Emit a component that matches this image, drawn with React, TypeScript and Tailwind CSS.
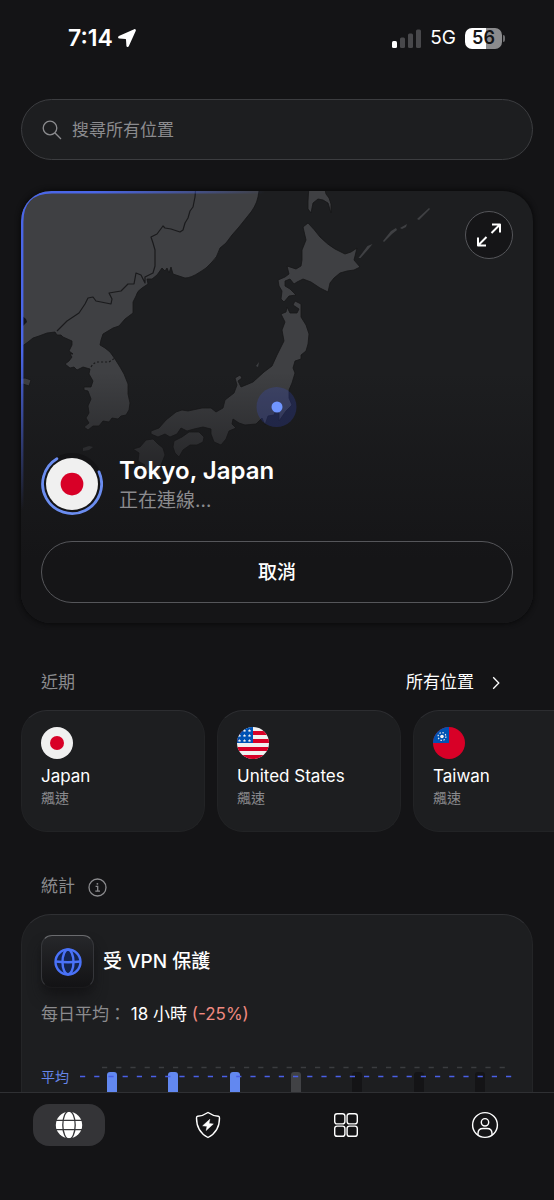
import { ReactNode, useState } from "react";
import clsx from "clsx";

type Country = "jp" | "us" | "tw";

const recents: { code: Country; name: string; detail: string }[] = [
    { code: "jp", name: "Japan", detail: "飆速" },
    { code: "us", name: "United States", detail: "飆速" },
    { code: "tw", name: "Taiwan", detail: "飆速" },
];

const bars = ["bg-[#6288f0]", "bg-[#6288f0]", "bg-[#6288f0]", "bg-[#414245]", "bg-[#141416]", "bg-[#141416]", "bg-[#141416]"];

function Flag({ code, className }: { code: Country; className?: string }) {
    return (
        <svg viewBox="0 0 32 32" className={clsx("shrink-0 overflow-hidden rounded-full", className)} aria-hidden="true">
            {code === "jp" && (
                <>
                    <rect width="32" height="32" fill="#f0f0f0" />
                    <circle cx="16" cy="16" r="7" fill="#d80027" />
                </>
            )}
            {code === "us" && (
                <>
                    <rect width="32" height="32" fill="#f0f0f0" />
                    {[4, 12, 20, 28].map((y) => (
                        <rect key={y} y={y} width="32" height="4" fill="#d80027" />
                    ))}
                    <rect width="16" height="16" fill="#0052b4" />
                    {[3.5, 8.5, 13.5].map((y) =>
                        [2.5, 7.5, 12.5].map((x) => (
                            <path key={`${x}-${y}`} d={`M${x} ${y - 1.6}l.5 1 1.1.1-.8.8.2 1.1-1-.5-1 .5.2-1.1-.8-.8 1.1-.1z`} fill="#f0f0f0" />
                        ))
                    )}
                </>
            )}
            {code === "tw" && (
                <>
                    <rect width="32" height="32" fill="#d80027" />
                    <rect width="16" height="16" fill="#0052b4" />
                    <circle cx="9" cy="9.5" r="1.8" fill="#f0f0f0" />
                    <circle cx="9" cy="9.5" r="3.9" fill="none" stroke="#f0f0f0" strokeWidth="1.2" strokeDasharray="1.4 1.66" />
                </>
            )}
        </svg>
    );
}

function StatusBar() {
    return (
        <header className="flex h-[76px] shrink-0 items-center justify-between pr-[49px] pl-[68px]">
            <div className="flex items-center gap-1">
                <span className="text-[23px] leading-7 font-semibold">7:14</span>
                <svg width="20" height="20" viewBox="0 0 20 20" fill="currentColor" aria-hidden="true">
                    <path d="M17.2 1.2 1.9 8.1c-1.3.6-1 2.4.4 2.5l6.2.4c.3 0 .5.2.5.5l.4 6.2c.1 1.5 1.9 1.8 2.5.4l6.9-15.3c.4-1-.6-2-1.6-1.6z" />
                </svg>
            </div>
            <div className="flex items-center gap-[9px]">
                <svg width="29" height="19" viewBox="0 0 29 19" aria-hidden="true">
                    <rect x="0" y="12" width="5" height="7" rx="1.5" fill="#fff" />
                    <rect x="8" y="8.5" width="5" height="10.5" rx="1.5" fill="#48484b" />
                    <rect x="16" y="4.5" width="5" height="14.5" rx="1.5" fill="#48484b" />
                    <rect x="24" y="0.5" width="5" height="18.5" rx="1.5" fill="#48484b" />
                </svg>
                <span className="text-[19px] leading-6">5G</span>
                <div className="flex items-center gap-px">
                    <span className="flex h-[21px] w-[37px] items-center justify-center rounded-[7px] bg-linear-to-r from-white from-57% to-[#8b8b8d] to-57% text-[18px] leading-5 font-semibold text-[#141416]">
                        56
                    </span>
                    <span className="h-[7px] w-[2px] rounded-r-full bg-[#6d6d70]" />
                </div>
            </div>
        </header>
    );
}

function RegionMap() {
    return (
        <svg viewBox="21 191 512 432" preserveAspectRatio="xMinYMin slice" className="absolute inset-0 size-full" aria-hidden="true">
            <defs>
                <linearGradient id="fade" x1="0" y1="0" x2="0" y2="1">
                    <stop offset="0.42" stopColor="#151517" stopOpacity="0" />
                    <stop offset="0.62" stopColor="#161618" stopOpacity="0.55" />
                    <stop offset="0.85" stopColor="#151517" />
                </linearGradient>
                <linearGradient id="edgeTop" gradientUnits="userSpaceOnUse" x1="21" y1="0" x2="265" y2="0">
                    <stop offset="0.3" stopColor="#4a66e8" />
                    <stop offset="1" stopColor="#4a66e8" stopOpacity="0" />
                </linearGradient>
                <linearGradient id="edgeSide" gradientUnits="userSpaceOnUse" x1="0" y1="191" x2="0" y2="510">
                    <stop offset="0.5" stopColor="#4a66e8" />
                    <stop offset="1" stopColor="#4a66e8" stopOpacity="0" />
                </linearGradient>
            </defs>
            <g fill="#3f4043" stroke="#161618" strokeWidth="0.8" strokeLinejoin="round">
                {/* mainland and Korea */}
                <path d="M15 185H260L258 197Q256 207 247 217L239 227 232 235 226 243 220 248Q217 258 212 262 206 269 200 272 191 278 185 278L179 276 173 274 171 267 169 273 167 268 165 271 162 268 157 275 152 279 147 279 148 284 142 288Q137 291 136 296L133 302V313L125 319 119 326 113 328 103 334 101 340 100 345 105 348 110 352 115 359 120 367 124 374 128 384V394L130 403 129 410 126 415 121 416 118 419 112 418 109 422 103 421 99 426 93 426 88 430 84 427 89 423 86 418 89 413 88 406 91 399 88 391 84 390 84 387 91 387 93 381 89 374 90 369 83 367 77 370 74 367 70 368 65 364 69 361 72 357 70 354 73 354 69 351 72 345 72 341 63 337 61 335 57 335 55 332 47 333 39 336 33 338 28 342 21 347 15 350z" />
                <path d="M15 379 25 378 31 380 29 386 23 384 15 386z" />
                {/* Sakhalin */}
                <path d="M309 185H324L326 194 329 198 331 204 331 213 328 203 323 200 318 199 313 203 311 213 308 209 308 201z" />
                {/* Hokkaido */}
                <path d="M308 223Q314 229 320 237 328 245 335 249L345 254 351 252 357 248 354 260 360 267 354 270 347 271 340 273 334 278 330 283 328 292 320 288 311 282 303 279 297 282 294 284 290 279 285 281 285 286 290 289 296 295 289 296 284 302 281 299 282 291 279 286 278 280 285 277 289 274 287 266 296 269 301 266 302 260 302 250 306 240 303 227z" />
                {/* Honshu */}
                <path d="M287 307 290 313 297 313 299 309 293 305 295 301 301 304 301 317 306 325 309 334 308 344 306 351 301 355 301 359 295 361 293 368 295 373 292 383 289 390 289 398 292 405 286 411 279 421 279 413 276 410 274 415 268 416 265 425 262 418 256 424 245 425 239 423 233 419 232 424 236 428 229 431 226 439 221 445 214 442 211 434 211 429 203 427 194 429 187 431 181 428 177 434 170 437 165 434 158 437 151 434 151 431 159 428 166 420 176 412 182 410 188 411 202 408 211 408 216 412 223 408 225 400 234 393 237 385 235 378 240 375 242 378 238 381 241 387 253 382 264 372 272 366 277 355 284 341 282 330 285 322 281 314 286 312z" />
                {/* Shikoku and Kyushu */}
                <path d="M174 441 182 437 189 432 199 432 204 437 203 442 197 445 190 445 183 450 179 457 175 453 173 447zM133 449 140 447 146 440 153 439 158 444 163 448 165 455 161 465 160 474 153 481 152 471 146 475 143 483 140 472 145 465 138 461 139 453z" />
            </g>
            <g fill="#3f4043">
                {/* Kuril islands and small islands */}
                <path d="M358.500 258l9-12 5-2-4 5-8 9zM383 241l8-10 5-3 1 2-5 4-8 8zM400 228l7-4-1 3-4 2zM417 219l12-11 1 1-11 11z" />
                <path d="M83 448l6-2 4 1-4 3-6 1zM256 366l3-4-1 5z" />
            </g>
            <path d="M21 315l5 4 1 3-6 6z" fill="#161618" />
            <g fill="none" stroke="#1a1a1c" strokeWidth="1.2" strokeLinejoin="round">
                <path d="M196 185 195 197 193 207 190 211 188 218 185 223 183 230 180 232 171 229 165 228 163 226 160 230 157 234 151 237 153 243 155 250 155 260 155 266 153 273 145 277 145 283 141 275 136 273 134 284 128 284 121 291 109 293 112 299 111 304 101 302 96 301 93 297 88 298 85 304 79 313 67 321 57 331" />
                <path d="M91 367Q94 362 98 362L109 362 115 358" strokeDasharray="2 2" />
            </g>
            <rect x="21" y="191" width="512" height="432" fill="url(#fade)" />
            <circle cx="276.500" cy="407" r="20" fill="#3b55ee" fillOpacity="0.2" />
            <circle cx="277" cy="407" r="5.500" fill="#7095ff" />
            <path d="M22.200 510V222" stroke="url(#edgeSide)" strokeWidth="2.400" fill="none" />
            <path d="M22.200 222Q22.200 192.200 52 192.200H265" stroke="url(#edgeTop)" strokeWidth="2.400" fill="none" />
        </svg>
    );
}

function ConnectionCard() {
    return (
        <section className="relative mt-[31px] flex min-h-[432px] flex-col justify-between overflow-hidden rounded-[30px] bg-[#1d1e20] p-5 shadow-[0_0_5px_1px_#09090a]">
            <RegionMap />
            <button aria-label="展開地圖" className="relative flex size-12 items-center justify-center self-end rounded-full border border-[#55565a] bg-[#151517]">
                <svg width="26" height="26" viewBox="0 0 26 26" fill="none" stroke="currentColor" strokeWidth="2" strokeLinejoin="round" aria-hidden="true">
                    <path d="M16 2.500H24V10.500M24 2.500 15.500 11M2 15.500V23.500H10M2 23.500 10.500 15" />
                </svg>
            </button>
            <div className="relative flex flex-col gap-[26px]">
                <div className="flex items-center gap-4">
                    <div className="grid size-[62px] place-items-center rounded-full bg-[#141416]">
                        <svg viewBox="0 0 62 62" className="col-start-1 row-start-1 size-[62px]" fill="none" aria-hidden="true">
                            <path d="M15.900 5.700A29.500 29.500 0 1 0 58 18.900" stroke="#6b8df0" strokeWidth="2.800" strokeLinecap="round" />
                        </svg>
                        <Flag code="jp" className="col-start-1 row-start-1 size-[52px]" />
                    </div>
                    <div className="pt-[2px]">
                        <h1 className="text-[24px] leading-8 font-semibold">Tokyo, Japan</h1>
                        <p className="text-[19px] leading-7 text-[#8b8b8e]">正在連線…</p>
                    </div>
                </div>
                <button className="h-[62px] w-full rounded-full border border-[#55565a] pt-[2px] text-[19px] font-medium">取消</button>
            </div>
        </section>
    );
}

function Recents() {
    return (
        <section>
            <div className="mt-[47px] flex h-[26px] items-center justify-between pr-[33px] pl-5">
                <h2 className="text-[17px] text-[#8b8b8e]">近期</h2>
                <a href="#locations" className="flex items-center gap-[18px] text-[17px]">
                    所有位置
                    <svg width="8" height="14" viewBox="0 0 8 14" fill="none" stroke="currentColor" strokeWidth="1.300" aria-hidden="true">
                        <path d="M1.200 1.200 6.800 7 1.200 12.800" />
                    </svg>
                </a>
            </div>
            <div className="-mr-[21px] mt-[14px] flex gap-3 overflow-hidden">
                {recents.map((item) => (
                    <button
                        key={item.code}
                        className="flex h-[122px] w-[184px] shrink-0 flex-col items-start rounded-[26px] border border-[#222325] border-t-[#2c2d30] bg-[#1d1e20] px-[19px] pt-4 text-left"
                    >
                        <Flag code={item.code} className="size-8" />
                        <span className="mt-[5px] text-[17px] leading-6">{item.name}</span>
                        <span className="text-[14px] leading-5 text-[#8b8b8e]">{item.detail}</span>
                    </button>
                ))}
            </div>
        </section>
    );
}

function UsageChart() {
    return (
        <div className="relative mt-[39px] flex pr-[2px] pl-[40px]">
            <span className="absolute top-0 left-0 text-[14px] leading-6 text-[#6685e8]">平均</span>
            <div className="mt-[7px] grid h-[120px] flex-1 grid-cols-7 justify-items-center">
                {bars.map((color, i) => (
                    <span key={i} className={clsx("w-[10px] rounded-t-[3px]", color)} />
                ))}
            </div>
            <svg className="absolute top-0 left-[38px] h-6 w-[calc(100%-38px)]" aria-hidden="true">
                <line x1="23" y1="2.500" x2="99%" y2="2.500" stroke="#3b3c3f" strokeWidth="1.500" strokeDasharray="5.200 9" />
                <line x1="1" y1="11.500" x2="100%" y2="11.500" stroke="#4a5fe6" strokeWidth="1.500" strokeDasharray="5.200 9" />
            </svg>
        </div>
    );
}

function Stats() {
    return (
        <section>
            <div className="mt-[42px] flex h-[26px] items-center gap-[13px] pl-5 text-[17px] text-[#8b8b8e]">
                <h2>統計</h2>
                <button aria-label="統計說明">
                    <svg width="19" height="19" viewBox="0 0 19 19" fill="none" stroke="currentColor" strokeWidth="1.300" aria-hidden="true">
                        <circle cx="9.500" cy="9.500" r="8.500" />
                        <path d="M7.600 8.400H9.700V13M7.300 13.200H12" />
                        <circle cx="9.400" cy="5.800" r="0.900" fill="currentColor" stroke="none" />
                    </svg>
                </button>
            </div>
            <div className="mt-[14px] rounded-t-[30px] border border-b-0 border-[#242527] border-t-[#2f3033] bg-[#1d1e20] px-[19px] pt-5">
                <div className="flex items-center gap-[9px]">
                    <span className="flex size-[53px] items-center justify-center rounded-[11px] border border-x-[#35363a] border-t-[#6a6b6e] border-b-[#1a1a1c] bg-linear-to-b from-[#26272a] to-[#131315] shadow-lg shadow-[#141416]">
                        <svg width="28" height="28" viewBox="0 0 28 28" fill="none" stroke="#4a72f8" strokeWidth="2.400" aria-hidden="true">
                            <circle cx="14" cy="14" r="12.500" fill="#14244f" />
                            <ellipse cx="14" cy="14" rx="5.500" ry="12.500" />
                            <path d="M1.500 13.500Q14 15 26.500 13.500" />
                        </svg>
                    </span>
                    <h3 className="pt-[2px] text-[19px] font-medium">受 VPN 保護</h3>
                </div>
                <p className="mt-[14px] text-[17px] leading-6">
                    <span className="text-[#8b8b8e]">每日平均：</span> 18 小時 <span className="text-[#f08a80]">(-25%)</span>
                </p>
                <UsageChart />
            </div>
        </section>
    );
}

const tabs: { label: string; icon: ReactNode }[] = [
    {
        label: "首頁",
        icon: (
            <svg width="28" height="28" viewBox="0 0 28 28" fill="none" stroke="#343437" strokeWidth="1.300" aria-hidden="true">
                <circle cx="14" cy="14" r="13.200" fill="#fff" stroke="none" />
                <path d="M0 9.300H28M0 18.700H28" />
                <ellipse cx="14" cy="14" rx="6.200" ry="14" />
            </svg>
        ),
    },
    {
        label: "防護",
        icon: (
            <svg width="28" height="28" viewBox="0 0 28 28" fill="none" stroke="currentColor" strokeWidth="1.400" strokeLinejoin="round" aria-hidden="true">
                <path d="M14 1.500C11 3.600 7 5 3.600 5.300 2.700 5.400 2.500 6 2.500 7 2.500 14.500 4.800 21.800 14 26.500 23.200 21.800 25.500 14.500 25.500 7 25.500 6 25.300 5.400 24.400 5.300 21 5 17 3.600 14 1.500z" />
                <path d="M15.800 8.300 8.700 14.800 13 15.300 12.200 19.500 19.300 13 15 12.500z" fill="currentColor" strokeWidth="0.500" />
            </svg>
        ),
    },
    {
        label: "產品",
        icon: (
            <svg width="26" height="26" viewBox="0 0 26 26" fill="none" stroke="currentColor" strokeWidth="1.400" aria-hidden="true">
                <rect x="1.700" y="1.700" width="10.200" height="10.200" rx="2.400" />
                <rect x="14.100" y="1.700" width="10.200" height="10.200" rx="2.400" />
                <rect x="1.700" y="14.100" width="10.200" height="10.200" rx="2.400" />
                <rect x="14.100" y="14.100" width="10.200" height="10.200" rx="2.400" />
            </svg>
        ),
    },
    {
        label: "帳號",
        icon: (
            <svg width="28" height="28" viewBox="0 0 28 28" fill="none" stroke="currentColor" strokeWidth="1.400" aria-hidden="true">
                <circle cx="14" cy="14" r="12.400" />
                <circle cx="14" cy="11.300" r="3.700" />
                <path d="M7 24V22.500C7 19.500 9 17.500 12 17.500H16C19 17.500 21 19.500 21 22.500V24" />
            </svg>
        ),
    },
];

function TabBar() {
    const [active, setActive] = useState(0);

    return (
        <nav className="grid h-[108px] shrink-0 grid-cols-4 items-start justify-items-center border-t border-[#2f3033] bg-[#141416] pt-[11px]">
            {tabs.map((tab, i) => (
                <button
                    key={tab.label}
                    aria-label={tab.label}
                    onClick={() => setActive(i)}
                    className={clsx("flex h-[42px] w-[72px] items-center justify-center rounded-[16px]", active === i && "bg-[#343437]")}
                >
                    {tab.icon}
                </button>
            ))}
        </nav>
    );
}

export default function App() {
    return (
        <div className="flex h-screen flex-col overflow-hidden bg-[#141416] font-['Inter','Noto_Sans_CJK_TC',sans-serif] text-white" lang="zh-Hant">
            <StatusBar />
            <main className="min-h-0 flex-1 overflow-y-auto px-[21px] pt-[23px] [scrollbar-width:none]">
                <label className="flex h-[61px] items-center gap-[10px] rounded-full border border-[#3c3d40] bg-[#1d1e20] px-5">
                    <svg width="20" height="20" viewBox="0 0 20 20" fill="none" stroke="#8b8b8e" strokeWidth="1.300" aria-hidden="true">
                        <circle cx="8" cy="8" r="6.800" />
                        <path d="M12.800 12.800 19 19" />
                    </svg>
                    <input
                        type="search"
                        aria-label="搜尋所有位置"
                        placeholder="搜尋所有位置"
                        className="min-w-0 flex-1 bg-transparent pt-[2px] text-[17px] outline-none placeholder:text-[#8b8b8e]"
                    />
                </label>
                <ConnectionCard />
                <Recents />
                <Stats />
            </main>
            <TabBar />
        </div>
    );
}
